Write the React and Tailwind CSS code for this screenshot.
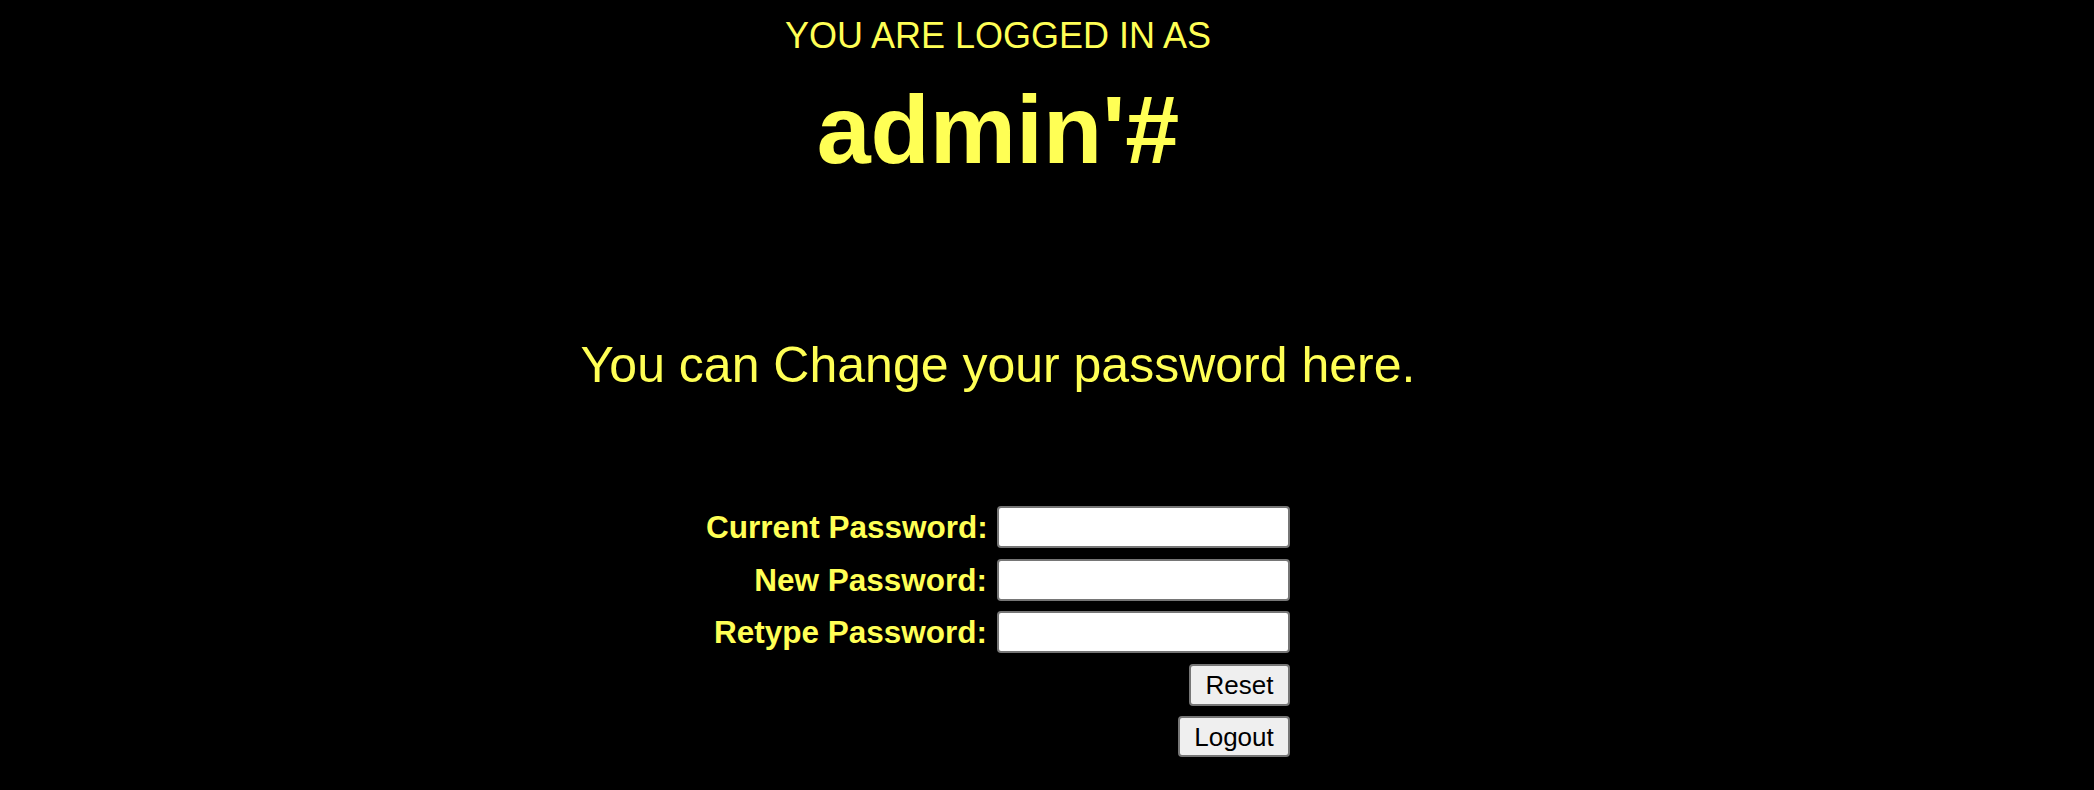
export default function App() {
  return (
    <div
      className="min-h-screen w-full bg-black text-[#ffff55]"
      style={{ fontFamily: '"Liberation Sans", Arial, sans-serif' }}
    >
      <div className="w-[1996px] flex flex-col items-center pt-[16px]">
        {/* Logged in header */}
        <p className="text-[36px] leading-[40px] uppercase">You are logged in as</p>
        <h1 className="mt-[20px] text-[97px] leading-[108px] font-bold">admin'#</h1>

        <h2 className="mt-[153px] text-[50px] leading-[56px]">
          You can Change your password here.
        </h2>

        {/* Change password form */}
        <form
          className="mt-[113px] grid grid-cols-[281px_293px] gap-x-[10px] gap-y-[10.5px] items-center"
          onSubmit={(e) => e.preventDefault()}
        >
          <label className="text-right text-[31.5px] font-bold leading-[36px] whitespace-nowrap">Current Password:</label>
          <input
            type="password"
            className="h-[42px] w-[293px] bg-white border-2 border-[#767676] rounded-[4px] px-2 text-black outline-none"
          />

          <label className="text-right text-[31.5px] font-bold leading-[36px] whitespace-nowrap">New Password:</label>
          <input
            type="password"
            className="h-[42px] w-[293px] bg-white border-2 border-[#767676] rounded-[4px] px-2 text-black outline-none"
          />

          <label className="text-right text-[31.5px] font-bold leading-[36px] whitespace-nowrap">Retype Password:</label>
          <input
            type="password"
            className="h-[42px] w-[293px] bg-white border-2 border-[#767676] rounded-[4px] px-2 text-black outline-none"
          />

          <div />
          <div className="flex justify-end">
            <button
              type="reset"
              className="h-[42px] w-[101px] bg-[#efefef] border-2 border-[#767676] rounded-[4px] text-black text-[26px] leading-none"
            >
              Reset
            </button>
          </div>

          <div />
          <div className="flex justify-end">
            <button
              type="button"
              className="h-[41px] w-[112px] bg-[#efefef] border-2 border-[#767676] rounded-[4px] text-black text-[26px] leading-none"
            >
              Logout
            </button>
          </div>
        </form>
      </div>
    </div>
  );
}
